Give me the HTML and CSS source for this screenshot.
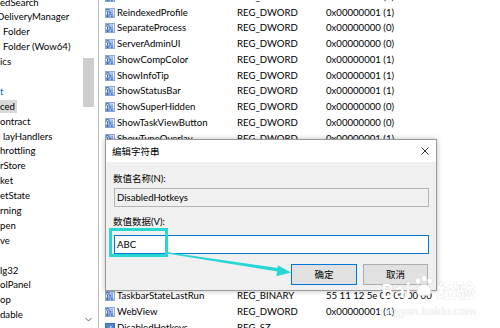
FILE: index.html
```html
<!DOCTYPE html>
<html lang="zh-CN">
<head>
<meta charset="utf-8">
<title>编辑字符串</title>
<link rel="stylesheet" href="styles.css">
</head>
<body>
<div class="app">
  <div class="tree">
    <ul class="tree-list">
      <li class="tree-item">edSearch</li>
      <li class="tree-item shift-l">DeliveryManager</li>
      <li class="tree-item shift-r">Folder</li>
      <li class="tree-item shift-r">Folder (Wow64)</li>
      <li class="tree-item">ics</li>
      <li class="tree-item"></li>
      <li class="tree-item link">t</li>
      <li class="tree-item"><span class="sel">ced</span></li>
      <li class="tree-item">ontract</li>
      <li class="tree-item shift-r">layHandlers</li>
      <li class="tree-item">hrottling</li>
      <li class="tree-item">rStore</li>
      <li class="tree-item">ket</li>
      <li class="tree-item">etState</li>
      <li class="tree-item">rning</li>
      <li class="tree-item">pen</li>
      <li class="tree-item">ve</li>
      <li class="tree-item"></li>
      <li class="tree-item">lg32</li>
      <li class="tree-item">olPanel</li>
      <li class="tree-item">op</li>
      <li class="tree-item">dable</li>
    </ul>
    <div class="vscroll">
      <div class="track-top"></div>
      <div class="thumb"></div>
      <div class="track-rest"></div>
      <svg class="down" width="7" height="5" viewBox="0 0 7 5"><path d="M0.5 1 L3.5 4 L6.5 1" fill="none" stroke="#606060" stroke-width="1"/></svg>
    </div>
  </div>
  <div class="values">
    <div class="values-list">
      <div class="row"><span class="name"><svg class="ico" width="10" height="10" viewBox="0 0 10 10"><use href="#dw"/></svg>MMTaskbarGlomLevel</span><span>REG_DWORD</span><span>0x00000001 (1)</span></div>
      <div class="row"><span class="name"><svg class="ico" width="10" height="10" viewBox="0 0 10 10"><use href="#dw"/></svg>ReindexedProfile</span><span>REG_DWORD</span><span>0x00000001 (1)</span></div>
      <div class="row"><span class="name"><svg class="ico" width="10" height="10" viewBox="0 0 10 10"><use href="#dw"/></svg>SeparateProcess</span><span>REG_DWORD</span><span>0x00000000 (0)</span></div>
      <div class="row"><span class="name"><svg class="ico" width="10" height="10" viewBox="0 0 10 10"><use href="#dw"/></svg>ServerAdminUI</span><span>REG_DWORD</span><span>0x00000000 (0)</span></div>
      <div class="row"><span class="name"><svg class="ico" width="10" height="10" viewBox="0 0 10 10"><use href="#dw"/></svg>ShowCompColor</span><span>REG_DWORD</span><span>0x00000001 (1)</span></div>
      <div class="row"><span class="name"><svg class="ico" width="10" height="10" viewBox="0 0 10 10"><use href="#dw"/></svg>ShowInfoTip</span><span>REG_DWORD</span><span>0x00000001 (1)</span></div>
      <div class="row"><span class="name"><svg class="ico" width="10" height="10" viewBox="0 0 10 10"><use href="#dw"/></svg>ShowStatusBar</span><span>REG_DWORD</span><span>0x00000001 (1)</span></div>
      <div class="row"><span class="name"><svg class="ico" width="10" height="10" viewBox="0 0 10 10"><use href="#dw"/></svg>ShowSuperHidden</span><span>REG_DWORD</span><span>0x00000000 (0)</span></div>
      <div class="row"><span class="name"><svg class="ico" width="10" height="10" viewBox="0 0 10 10"><use href="#dw"/></svg>ShowTaskViewButton</span><span>REG_DWORD</span><span>0x00000000 (0)</span></div>
      <div class="row"><span class="name"><svg class="ico" width="10" height="10" viewBox="0 0 10 10"><use href="#dw"/></svg>ShowTypeOverlay</span><span>REG_DWORD</span><span>0x00000001 (1)</span></div>
      <div class="row"></div>
      <div class="row"></div>
      <div class="row"></div>
      <div class="row"></div>
      <div class="row"></div>
      <div class="row"></div>
      <div class="row"></div>
      <div class="row"></div>
      <div class="row"></div>
      <div class="row"><span class="name"><svg class="ico" width="10" height="10" viewBox="0 0 10 10"><use href="#dw"/></svg>TaskbarStateLastRun</span><span>REG_BINARY</span><span>55 11 12 5e 00 00 00 00</span></div>
      <div class="row"><span class="name"><svg class="ico" width="10" height="10" viewBox="0 0 10 10"><use href="#dw"/></svg>WebView</span><span>REG_DWORD</span><span>0x00000001 (1)</span></div>
      <div class="row"><span class="name"><span class="ico-sz">ab</span>DisabledHotkeys</span><span>REG_SZ</span><span></span></div>
    </div>
  </div>
</div>

<svg class="defs" width="0" height="0">
  <defs>
    <g id="dw">
      <rect x="0.5" y="0.5" width="9" height="9" fill="#eaf1fb" stroke="#8eaad6"/>
      <rect x="1.7" y="1.6" width="1.6" height="2" fill="none" stroke="#2f62b8" stroke-width="0.7"/>
      <rect x="4.4" y="1.4" width="0.9" height="2.4" fill="#2f62b8"/>
      <rect x="6.6" y="1.4" width="0.9" height="2.4" fill="#2f62b8"/>
      <rect x="2.1" y="4" width="0.9" height="2.4" fill="#2f62b8"/>
      <rect x="4.1" y="4.2" width="1.6" height="2" fill="none" stroke="#2f62b8" stroke-width="0.7"/>
      <rect x="6.6" y="4" width="0.9" height="2.4" fill="#2f62b8"/>
      <rect x="1.7" y="6.8" width="1.6" height="2" fill="none" stroke="#2f62b8" stroke-width="0.7"/>
      <rect x="4.4" y="6.6" width="0.9" height="2.4" fill="#2f62b8"/>
      <rect x="6.3" y="6.8" width="1.6" height="2" fill="none" stroke="#2f62b8" stroke-width="0.7"/>
    </g>
  </defs>
</svg>

<div class="dialog">
  <div class="titlebar">
    <span class="title">编辑字符串</span>
    <svg class="close" width="8" height="8" viewBox="0 0 8 8"><path d="M0.5 0.5 L7.5 7.5 M7.5 0.5 L0.5 7.5" stroke="#333" stroke-width="1"/></svg>
  </div>
  <div class="dlg-body">
    <div class="label label-first">数值名称(N):</div>
    <div class="field field-ro">DisabledHotkeys</div>
    <div class="label">数值数据(V):</div>
    <div class="field field-edit">ABC</div>
    <div class="buttons">
      <div class="btn btn-default">确定</div>
      <div class="btn">取消</div>
    </div>
  </div>
</div>

<div class="mark-box"></div>
<svg class="arrow" width="500" height="328" viewBox="0 0 500 328">
  <polygon points="168,252.2 168,253.8 279,271.8 279.6,268.2" fill="#29d6d6"/>
  <polygon points="291,272.5 277.9,265.3 276.4,276.2" fill="#29d6d6"/>
</svg>

<div class="watermark">
  <div class="wm-logo"><span>Bai</span><svg class="paw" width="24" height="22" viewBox="0 0 24 22"><g fill="#fff" stroke="#dcdcdc" stroke-width="0.8"><ellipse cx="6" cy="6" rx="2.6" ry="3.2"/><ellipse cx="12" cy="3.5" rx="2.6" ry="3.2"/><ellipse cx="18" cy="6" rx="2.6" ry="3.2"/><path d="M5 17 C5 11 9 9.5 12 9.5 C15 9.5 19 11 19 17 C19 20 16 21 12 20 C8 21 5 20 5 17 Z"/></g></svg><span>经验</span></div>
  <div class="wm-url">jingyan.baidu.com</div>
</div>
</body>
</html>
```

FILE: styles.css
```css
* {
  box-sizing: border-box;
  margin: 0;
  padding: 0;
}

html, body {
  width: 500px;
  height: 328px;
}

body {
  position: relative;
  overflow: hidden;
  background: #ffffff;
  color: #000000;
  font-family: Lato, "Noto Sans CJK SC", sans-serif;
  font-size: 9.6px;
}

.app {
  display: flex;
  height: 328px;
}

/* ---------- tree pane ---------- */
.tree {
  display: flex;
  width: 99px;
  flex: none;
  border-right: 1px solid #bcbcbc;
  padding-right: 4px;
}

.tree-list {
  list-style: none;
  width: 83px;
  overflow: hidden;
  margin-top: -4.45px;
}

.tree-item {
  height: 14.9px;
  line-height: 14.9px;
  white-space: nowrap;
}

.shift-l {
  margin-left: -3px;
}

.shift-r {
  padding-left: 3px;
}

.link {
  color: #0066cc;
}

.sel {
  display: inline-block;
  height: 13px;
  line-height: 13px;
  padding-right: 2px;
  background: #d9d9d9;
}

.vscroll {
  width: 11px;
  display: flex;
  flex-direction: column;
  align-items: center;
}

.track-top {
  height: 58px;
  flex: none;
}

.thumb {
  width: 11px;
  height: 49px;
  flex: none;
  background: #cdcdcd;
}

.track-rest {
  flex: 1;
}

.down {
  margin-bottom: 6px;
}

/* ---------- values pane ---------- */
.values {
  flex: 1;
  overflow: hidden;
  padding-left: 6px;
}

.values-list {
  margin-top: -11.1px;
}

.row {
  display: grid;
  grid-template-columns: 132px 89px 1fr;
  height: 15.75px;
  line-height: 15.75px;
  white-space: nowrap;
  overflow: hidden;
}

.name {
  display: flex;
  align-items: center;
  gap: 2px;
  overflow: hidden;
}

.ico {
  flex: none;
}

.ico-sz {
  flex: none;
  width: 10px;
  height: 10px;
  line-height: 10px;
  font-size: 7px;
  font-weight: bold;
  text-align: center;
  color: #ffffff;
  background: #4f86cf;
  border: 1px solid #3a6db5;
}

.defs {
  position: absolute;
}

/* ---------- dialog ---------- */
.dialog {
  position: absolute;
  left: 105px;
  top: 139px;
  width: 332px;
  height: 152px;
  border: 1px solid #9a9a9a;
  background: #f0f0f0;
  box-shadow: 0 0 5px rgba(0, 0, 0, 0.28);
  display: flex;
  flex-direction: column;
}

.titlebar {
  height: 22px;
  flex: none;
  background: #ffffff;
  display: flex;
  align-items: center;
  justify-content: space-between;
  padding: 0 7px 0 6px;
}

.title {
  font-size: 9.5px;
}

.dlg-body {
  flex: 1;
  padding: 0 7px 0 7px;
  display: flex;
  flex-direction: column;
}

.label {
  height: 12px;
  line-height: 12px;
  font-size: 9.5px;
  margin-top: 9px;
}

.label-first {
  margin-top: 11px;
}

.field {
  height: 19px;
  line-height: 17px;
  margin: 3px 0 0 1px;
  padding-left: 2px;
  border: 1px solid #b4b4b4;
}

.field-ro {
  background: #f0f0f0;
}

.field-edit {
  margin-top: 7px;
  background: #ffffff;
  border-color: #0078d7;
}

.buttons {
  display: flex;
  justify-content: flex-end;
  gap: 6px;
  margin-top: 10px;
  padding-right: 1px;
}

.btn {
  width: 65px;
  height: 21px;
  line-height: 19px;
  text-align: center;
  font-size: 9.5px;
  background: #e1e1e1;
  border: 1px solid #adadad;
}

.btn-default {
  width: 66px;
  border-color: #0078d7;
}

/* ---------- annotation ---------- */
.mark-box {
  position: absolute;
  left: 109px;
  top: 228px;
  width: 59px;
  height: 29px;
  border: 3px solid #29d6d6;
}

.arrow {
  position: absolute;
  left: 0;
  top: 0;
}

/* ---------- watermark ---------- */
.watermark {
  position: absolute;
  left: 381px;
  top: 278px;
  color: #ffffff;
  font-family: "Noto Sans CJK SC", sans-serif;
  text-shadow: 0 0 1px rgba(0, 0, 0, 0.25);
}

.wm-logo {
  display: flex;
  align-items: center;
  font-size: 19px;
  font-weight: bold;
  line-height: 24px;
}

.paw {
  margin: -8px 1px 0 1px;
}

.wm-url {
  font-size: 11px;
  line-height: 14px;
  margin-top: 1px;
}
```
